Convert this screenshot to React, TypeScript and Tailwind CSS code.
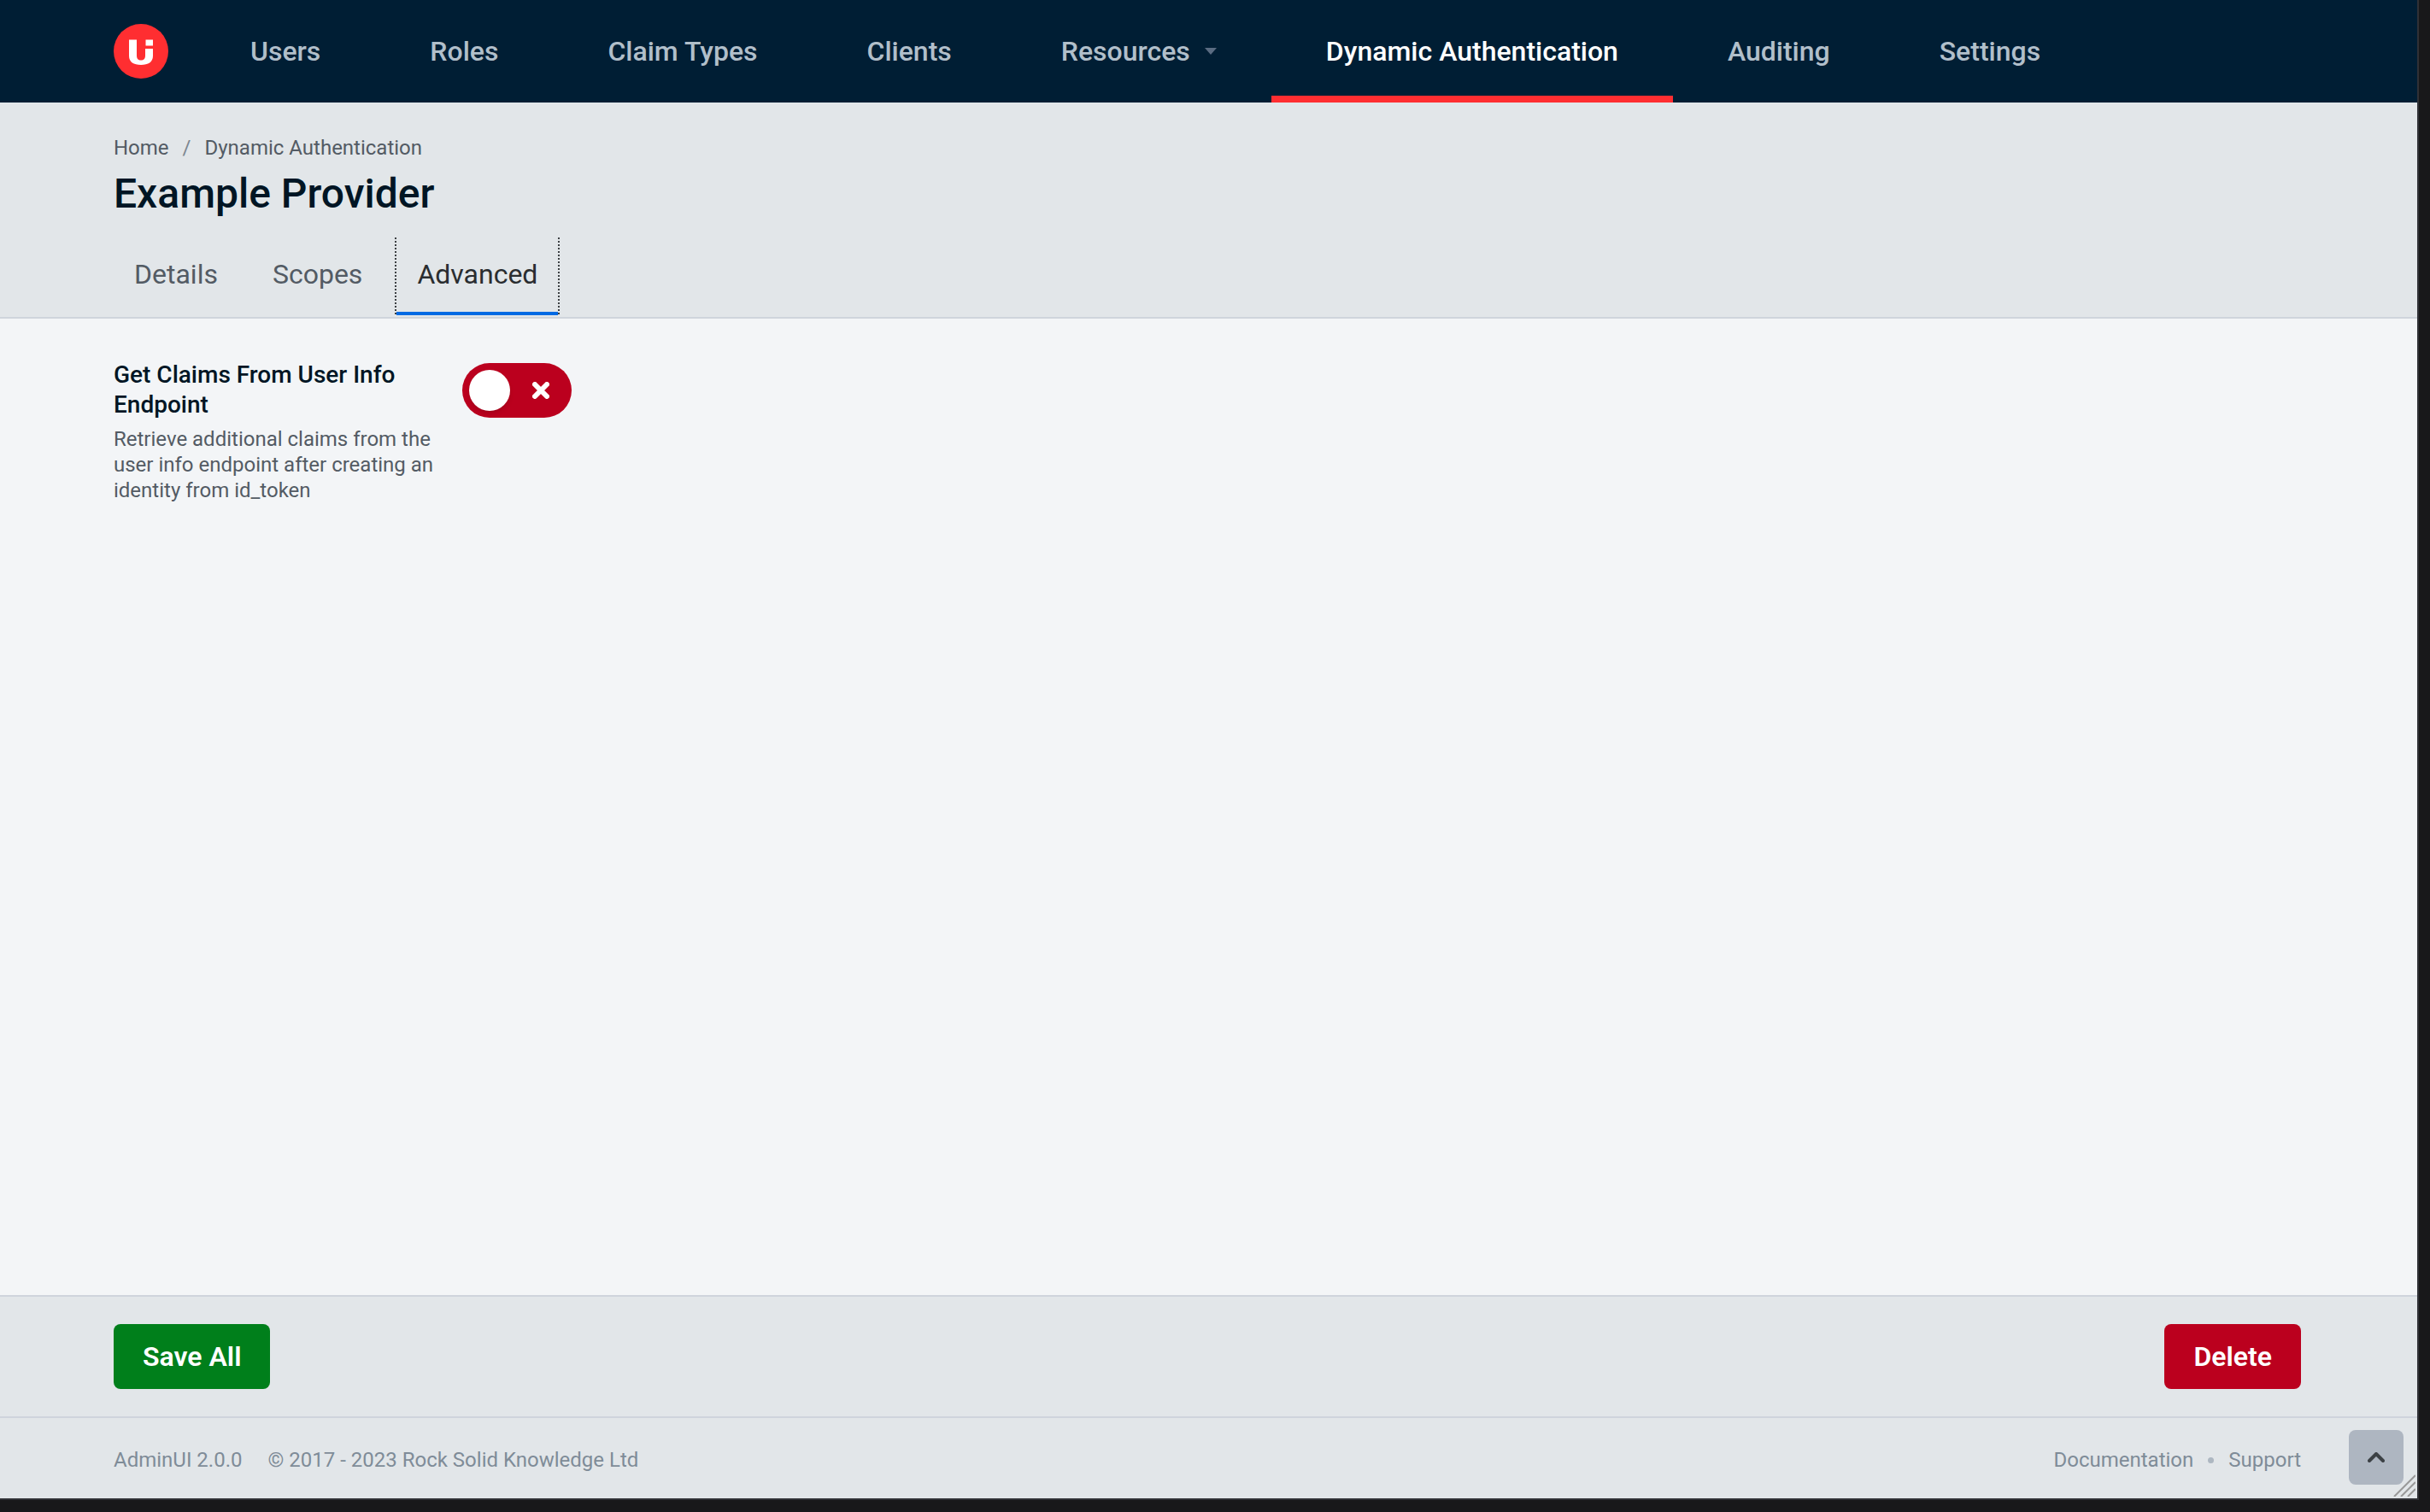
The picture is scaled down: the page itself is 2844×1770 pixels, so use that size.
import React from "react";

const navItems = [
  { label: "Users" },
  { label: "Roles" },
  { label: "Claim Types" },
  { label: "Clients" },
  { label: "Resources", menu: true },
  { label: "Dynamic Authentication", active: true },
  { label: "Auditing" },
  { label: "Settings" },
];

function Logo() {
  return (
    <svg viewBox="0 0 64 64" className="size-16" aria-hidden="true">
      <circle cx="32" cy="32" r="32" fill="#ff2e31" />
      <path
        d="M18 18.500h9v18.500c0 3.800 1.800 5.500 5 5.500s5-1.700 5-5.500v-8h9v8.500c0 7-5.500 10.500-14 10.500s-14-3.500-14-10.500z"
        fill="#fff"
      />
      <path d="M37.500 18.500h8.500v7h-8.500z" fill="#fff" />
    </svg>
  );
}

function NavBar() {
  return (
    <header className="flex h-[120px] items-stretch bg-[#001e34] pl-[133px]">
      <a href="#home" aria-label="AdminUI home" className="mr-8 flex items-center">
        <Logo />
      </a>
      <nav className="flex text-[32px] font-medium leading-10">
        {navItems.map((item) => (
          <a
            key={item.label}
            href="#nav"
            className={
              item.active
                ? "flex items-center border-b-8 border-[#ff2e31] px-16 pt-2 text-white"
                : "flex items-center border-b-8 border-transparent px-16 pt-2 text-[#b1bfca]"
            }
          >
            {item.label}
            {item.menu && (
              <svg viewBox="0 0 14 8" className="ml-[17px] h-2 w-3.5" aria-hidden="true">
                <path d="M0 0h14L7 8z" fill="#5a6c82" />
              </svg>
            )}
          </a>
        ))}
      </nav>
    </header>
  );
}

function PageHeader() {
  return (
    <section className="border-b-2 border-[#cfd5dc] bg-[#e2e6e9] px-[133px] pt-[33px]">
      <nav aria-label="Breadcrumb" className="flex gap-4 text-2xl leading-[40px] text-[#535b64]">
        <a href="#home">Home</a>
        <span className="text-[#7c8690]">/</span>
        <a href="#dynamic">Dynamic Authentication</a>
      </nav>
      <h1 className="text-5xl font-medium leading-[68px] text-[#001524]">Example Provider</h1>
      <div role="tablist" className="mt-[17px] flex gap-4 text-[32px] leading-10 text-[#535b64]">
        <button role="tab" aria-selected={false} className="px-6 pb-[30px] pt-[23px]">Details</button>
        <button role="tab" aria-selected={false} className="px-6 pb-[30px] pt-[23px]">Scopes</button>
        <button
          role="tab"
          aria-selected={true}
          className="relative mb-0.5 border-b-4 border-[#006ae3] px-6 pb-6 pt-[23px] text-[#2a2d30] before:absolute before:-bottom-[3px] before:-left-0.5 before:top-0 before:w-0.5 before:bg-[repeating-linear-gradient(#3c4043_0_2px,transparent_2px_4px)] after:absolute after:-bottom-[3px] after:-right-0.5 after:top-0 after:w-0.5 after:bg-[repeating-linear-gradient(#3c4043_0_2px,transparent_2px_4px)]"
        >
          Advanced
        </button>
      </div>
    </section>
  );
}

function ClaimsSetting() {
  return (
    <div className="flex items-start gap-8">
      <div className="w-[376px]">
        <label htmlFor="claims" className="block text-[28px] font-medium leading-[35px] text-[#001524]">
          Get Claims From User Info Endpoint
        </label>
        <p id="claims-help" className="mt-2 text-2xl leading-[30px] text-[#535b64]">
          Retrieve additional claims from the user info endpoint after creating an identity from id_token
        </p>
      </div>
      <button
        id="claims"
        type="button"
        role="switch"
        aria-checked={false}
        aria-describedby="claims-help"
        className="mt-1 flex h-16 w-32 items-center justify-between rounded-full bg-[#bb001e] pl-2 pr-[26px]"
      >
        <span className="size-12 rounded-full bg-white shadow-md" />
        <svg viewBox="0 0 20 20" className="size-5" aria-hidden="true">
          <path d="M3 3l14 14M17 3L3 17" stroke="#fff" strokeWidth="6" strokeLinecap="round" />
        </svg>
      </button>
    </div>
  );
}

function ActionBar() {
  return (
    <div className="flex justify-between border-t-2 border-[#cfd4dc] bg-[#e2e6e9] py-8 pl-[133px] pr-[136px] text-[32px] font-semibold leading-9 text-white">
      <button type="button" className="rounded-lg bg-[#007f1b] px-[34px] py-5">Save All</button>
      <button type="button" className="rounded-lg bg-[#bb001e] px-[34px] py-5">Delete</button>
    </div>
  );
}

function Footer() {
  return (
    <footer className="relative flex h-24 items-center justify-between border-t-2 border-[#cfd4dc] bg-[#e2e6e9] pl-[133px] pr-[136px] pt-1 text-2xl text-[#7f8c98]">
      <div className="flex gap-[30px]">
        <span>AdminUI 2.0.0</span>
        <span>© 2017 - 2023 Rock Solid Knowledge Ltd</span>
      </div>
      <div className="flex items-center gap-[17px]">
        <a href="#docs">Documentation</a>
        <span className="size-[7px] rounded-full bg-[#adb7c1]" />
        <a href="#support">Support</a>
      </div>
      <button
        type="button"
        aria-label="Back to top"
        className="absolute right-4 top-3.5 flex size-16 items-center justify-center rounded-lg bg-[#aeb6c1]"
      >
        <svg viewBox="0 0 20 12" className="h-3 w-5" fill="none" aria-hidden="true">
          <path d="M2 10l8-8 8 8" stroke="#3c4145" strokeWidth="4" strokeLinecap="round" strokeLinejoin="round" />
        </svg>
      </button>
      <svg viewBox="0 0 26 26" className="absolute bottom-0.5 right-0.5 size-[26px]" fill="none" aria-hidden="true">
        <path d="M1 26L26 1M9 26L26 9M17 26l9-9" stroke="#999" strokeWidth="2" />
      </svg>
    </footer>
  );
}

export default function App() {
  return (
    <div className="min-h-screen bg-[#18181a] pb-4 pr-[15px] font-[Roboto,sans-serif]">
      <div className="flex min-h-[calc(100vh-16px)] flex-col bg-[#f3f5f7] shadow-[0_0_0_2px_#303136]">
        <NavBar />
        <PageHeader />
        <main className="flex-1 px-[133px] pt-12">
          <ClaimsSetting />
        </main>
        <ActionBar />
        <Footer />
      </div>
    </div>
  );
}
